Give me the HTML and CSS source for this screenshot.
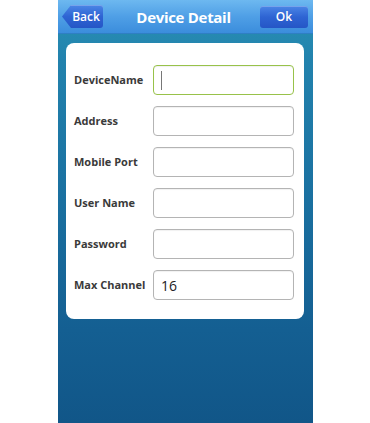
FILE: index.html
```html
<!DOCTYPE html>
<html>
<head>
<meta charset="utf-8">
<link rel="stylesheet" href="styles.css">
</head>
<body>
<div class="app">
  <div class="header">
    <div class="btn back">Back</div>
    <div class="title">Device Detail</div>
    <div class="btn ok">Ok</div>
  </div>
  <div class="content">
    <div class="card">
      <div class="row"><div class="label">DeviceName</div><div class="input focus"><span class="cursor"></span></div></div>
      <div class="row"><div class="label">Address</div><div class="input"></div></div>
      <div class="row"><div class="label">Mobile Port</div><div class="input"></div></div>
      <div class="row"><div class="label">User Name</div><div class="input"></div></div>
      <div class="row"><div class="label">Password</div><div class="input"></div></div>
      <div class="row"><div class="label">Max Channel</div><div class="input">16</div></div>
    </div>
  </div>
</div>
</body>
</html>
```

FILE: styles.css
```css
html, body { margin: 0; padding: 0; background: #fff; }
body { font-family: "Open Sans", "DejaVu Sans", sans-serif; }
.app {
  width: 255px;
  height: 423px;
  margin-left: 58px;
  display: flex;
  flex-direction: column;
  background: linear-gradient(180deg, #2b93b6 0px, #2282ad 60px, #1a70a0 200px, #145f92 330px, #115688 423px);
}
.header {
  height: 34px;
  flex: none;
  display: flex;
  align-items: center;
  justify-content: space-between;
  padding: 0 5px 0 4px;
  background: linear-gradient(180deg, #6db8f0 0%, #4f9fe6 50%, #3b8ddc 100%);
  border-bottom: 1px solid #2f7fc4;
  box-sizing: border-box;
}
.title {
  color: #fff;
  font-weight: 700;
  font-size: 15px;
  letter-spacing: -0.3px;
  margin-left: 4px;
  padding-top: 1px;
}
.btn {
  color: #fff;
  font-size: 12px;
  font-weight: 600;
  height: 23px;
  display: flex;
  align-items: center;
  justify-content: center;
  box-sizing: border-box;
  background: linear-gradient(180deg, #4b86e6 0%, #2e64d3 50%, #2556c6 100%);
  border-radius: 3px;
  box-shadow: inset 0 1px 0 rgba(255,255,255,0.25);
}
.back {
  width: 41px;
  padding-left: 7px;
  clip-path: polygon(0 50%, 9px 0, 100% 0, 100% 100%, 9px 100%);
}
.ok {
  width: 48px;
  height: 22px;
}
.content {
  flex: 1;
  padding: 9px 9px 0 8px;
}
.card {
  background: #fff;
  border-radius: 8px;
  height: 276px;
  box-sizing: border-box;
  padding: 22px 10px 18px 8px;
  display: flex;
  flex-direction: column;
  gap: 11px;
}
.row {
  display: flex;
  align-items: center;
  height: 30px;
}
.label {
  width: 79px;
  flex: none;
  font-size: 11px;
  font-weight: 700;
  color: #3a3a3a;
  margin-top: -2px;
}
.input {
  flex: 1;
  height: 30px;
  box-sizing: border-box;
  border: 1px solid #b4b4b4;
  border-radius: 4px;
  display: flex;
  align-items: center;
  padding-left: 7px;
  font-size: 14px;
  color: #222;
  background: #fff;
  box-shadow: inset 0 1px 1px rgba(0,0,0,0.06);
}
.input.focus {
  border: 1.5px solid #98c24a;
}
.cursor {
  width: 1px;
  height: 19px;
  background: #777;
}
```
